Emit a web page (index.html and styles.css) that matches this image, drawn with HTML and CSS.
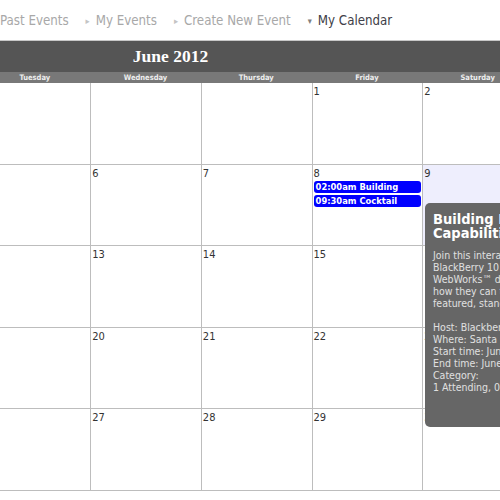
FILE: index.html
```html
<!DOCTYPE html>
<html>
<head>
<meta charset="utf-8">
<link rel="stylesheet" href="styles.css">
</head>
<body>
<nav class="nav">
  <a class="nav-item">Past Events</a>
  <a class="nav-item"><span class="tri">&#9656;</span>My Events</a>
  <a class="nav-item"><span class="tri">&#9656;</span>Create New Event</a>
  <a class="nav-item current"><span class="tri down">&#9662;</span>My Calendar</a>
</nav>
<div class="cal">
  <div class="cal-title">June 2012</div>
  <div class="cal-days">
    <div>Sunday</div><div>Monday</div><div>Tuesday</div><div>Wednesday</div><div>Thursday</div><div>Friday</div><div>Saturday</div>
  </div>
  <div class="cal-grid">
    <div class="cell"></div><div class="cell"></div><div class="cell"></div><div class="cell"></div><div class="cell"></div>
    <div class="cell"><span class="num">1</span></div>
    <div class="cell"><span class="num">2</span></div>

    <div class="cell"><span class="num">3</span></div>
    <div class="cell"><span class="num">4</span></div>
    <div class="cell"><span class="num">5</span></div>
    <div class="cell"><span class="num">6</span></div>
    <div class="cell"><span class="num">7</span></div>
    <div class="cell"><span class="num">8</span>
      <div class="event">02:00am Building</div>
      <div class="event">09:30am Cocktail</div>
    </div>
    <div class="cell today"><span class="num">9</span></div>

    <div class="cell"><span class="num">10</span></div>
    <div class="cell"><span class="num">11</span></div>
    <div class="cell"><span class="num">12</span></div>
    <div class="cell"><span class="num">13</span></div>
    <div class="cell"><span class="num">14</span></div>
    <div class="cell"><span class="num">15</span></div>
    <div class="cell"><span class="num">16</span></div>

    <div class="cell"><span class="num">17</span></div>
    <div class="cell"><span class="num">18</span></div>
    <div class="cell"><span class="num">19</span></div>
    <div class="cell"><span class="num">20</span></div>
    <div class="cell"><span class="num">21</span></div>
    <div class="cell"><span class="num">22</span></div>
    <div class="cell"><span class="num">23</span></div>

    <div class="cell"><span class="num">24</span></div>
    <div class="cell"><span class="num">25</span></div>
    <div class="cell"><span class="num">26</span></div>
    <div class="cell"><span class="num">27</span></div>
    <div class="cell"><span class="num">28</span></div>
    <div class="cell"><span class="num">29</span></div>
    <div class="cell"><span class="num">30</span></div>
  </div>
</div>
<div class="tooltip">
  <div class="tip-title">Building HTML5 Apps<br>Capabilities</div>
  <div class="tip-body">
    <p>Join this interactive session for<br>BlackBerry 10 app developers and<br>WebWorks&trade; developers to learn<br>how they can transform their<br>featured, standards-based apps.</p>
    <p>Host: Blackberry Developers<br>Where: Santa Clara, CA<br>Start time: June 8, 2012 02:00am<br>End time: June 8, 2012 05:00am<br>Category:<br>1 Attending, 0 Maybe</p>
  </div>
</div>
</body>
</html>
```

FILE: styles.css
```css
html, body {
  margin: 0;
  padding: 0;
  overflow: hidden;
  background: #fff;
  width: 500px;
  height: 500px;
}
body {
  position: relative;
  font-family: "DejaVu Sans Condensed", "DejaVu Sans", sans-serif;
}
.nav {
  display: flex;
  height: 40px;
  padding-top: 2px;
  box-sizing: border-box;
  font-size: 13.2px;
  line-height: 18px;
  white-space: nowrap;
}
.nav-item {
  color: #a8a8a8;
  margin-right: 17px;
  display: flex;
  align-items: center;
}
.nav-item.current {
  color: #404048;
}
.tri {
  font-size: 9px;
  color: #c4c4c4;
  margin-right: 6px;
}
.tri.down {
  color: #808080;
}
.cal {
  margin-left: -242px;
  width: 775px;
  border-top: 1px solid #c8c8c8;
}
.cal-title {
  background: #555555;
  height: 31px;
  line-height: 31px;
  color: #fff;
  font-family: "Liberation Serif", serif;
  font-weight: bold;
  font-size: 17.5px;
  text-align: center;
  padding-left: 50px;
}
.cal-days {
  display: grid;
  grid-template-columns: repeat(7, 1fr);
  background: #787878;
  height: 11px;
  line-height: 11px;
  font-size: 7.5px;
  font-weight: bold;
  color: #eeeeee;
  text-align: center;
}
.cal-grid {
  display: grid;
  grid-template-columns: repeat(7, 1fr);
  grid-auto-rows: 81.6px;
}
.cell {
  border-left: 1px solid #bdbdbd;
  border-bottom: 1px solid #bdbdbd;
  padding: 2px 1px 0 1px;
  box-sizing: border-box;
  font-size: 11px;
  color: #333;
}
.cell.today {
  background: #eeeefd;
}
.num {
  display: block;
  line-height: 13px;
  margin-bottom: 1px;
}
.event {
  background: #0000ff;
  color: #fff;
  font-weight: bold;
  font-size: 9.3px;
  line-height: 12px;
  height: 12px;
  border-radius: 3px;
  padding-left: 2px;
  margin-bottom: 2px;
  white-space: nowrap;
  overflow: hidden;
}
.tooltip {
  position: absolute;
  left: 425px;
  top: 203px;
  width: 230px;
  height: 224px;
  box-sizing: border-box;
  background: #666666;
  border-radius: 5px;
  padding: 9px 8px;
  color: #fff;
  white-space: nowrap;
}
.tip-title {
  font-weight: bold;
  font-size: 14.5px;
  line-height: 14px;
}
.tip-body {
  margin-top: 9px;
  font-size: 10.5px;
  line-height: 12px;
  color: #e0e0e0;
}
.tip-body p {
  margin: 0 0 12px 0;
}
```
